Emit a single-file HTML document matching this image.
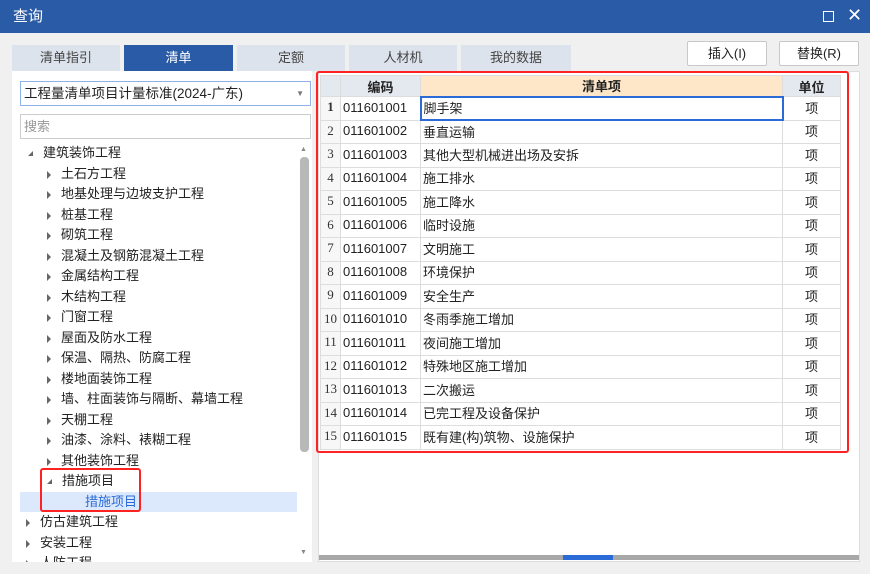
<!DOCTYPE html>
<html><head><meta charset="utf-8"><style>
*{margin:0;padding:0;box-sizing:border-box}
body{width:870px;height:574px;background:#f0f0f0;font-family:"Liberation Sans","Noto Sans CJK SC",sans-serif;font-size:13px;color:#222;position:relative;overflow:hidden}
.a{position:absolute}
.title{left:0;top:0;width:870px;height:33px;background:#2a5ba6;color:#fff;font-size:15px;line-height:33px;padding-left:13px}
.tab{top:45px;height:26px;background:#dde3ed;text-align:center;line-height:26px;color:#444;font-size:13px}
.btn{top:41px;height:25px;background:#fff;border:1px solid #c8c8c8;border-radius:2px;text-align:center;line-height:23px;font-size:13px}
.tree{position:absolute;left:0;top:0;width:297px;height:562px;overflow:hidden}
.tree div{position:absolute;height:20px;line-height:20px;font-size:13px;white-space:nowrap}
.tri{display:inline-block;width:0;height:0;border-top:4px solid transparent;border-bottom:4px solid transparent;border-left:4px solid #666;margin-right:10px;vertical-align:middle}
.down{display:inline-block;width:0;height:0;border-left:5px solid transparent;border-bottom:5px solid #666;margin-right:10px;vertical-align:middle}
table{border-collapse:collapse;position:absolute;left:320px;top:75px}
td{border:1px solid #ddd;height:23.5px;font-size:13px;padding:0 2px 2px;white-space:nowrap}
td.n{width:20px;text-align:center;font-family:"Liberation Serif",serif;background:#f7f7f7;color:#333}
th{height:21px;font-size:13px;font-weight:bold;border:1px solid #ddd;background:#e4e9f0}
</style></head><body>
<div class="a title">查询</div>
<div class="a" style="left:823px;top:11px;width:11px;height:11px;border:1.5px solid #fff"></div>
<div class="a" style="left:847px;top:5px;color:#fff;font-size:18px">✕</div>
<div class="a tab" style="left:12px;width:108px">清单指引</div>
<div class="a tab" style="left:124px;width:109px;background:#2a5ba6;color:#fff">清单</div>
<div class="a tab" style="left:237px;width:108px">定额</div>
<div class="a tab" style="left:349px;width:108px">人材机</div>
<div class="a tab" style="left:461px;width:110px">我的数据</div>
<div class="a btn" style="left:687px;width:80px">插入(I)</div>
<div class="a btn" style="left:779px;width:80px">替换(R)</div>
<div class="a" style="left:12px;top:71px;width:300px;height:491px;background:#fff"></div>
<div class="a" style="left:20px;top:81px;width:291px;height:25px;border:1px solid #8fb3e8;background:#fff;line-height:23px;padding-left:3px;font-size:13.5px">工程量清单项目计量标准(2024-广东)<span style="position:absolute;right:6px;top:0;font-size:8px;color:#777">▼</span></div>
<div class="a" style="left:20px;top:114px;width:291px;height:25px;border:1px solid #ccc;background:#fff;line-height:23px;padding-left:3px;color:#999">搜索</div>
<div class="tree">
<div style="left:28px;top:143px"><span class="down"></span>建筑装饰工程</div>
<div style="left:47px;top:164px"><span class="tri"></span>土石方工程</div>
<div style="left:47px;top:184px"><span class="tri"></span>地基处理与边坡支护工程</div>
<div style="left:47px;top:205px"><span class="tri"></span>桩基工程</div>
<div style="left:47px;top:225px"><span class="tri"></span>砌筑工程</div>
<div style="left:47px;top:246px"><span class="tri"></span>混凝土及钢筋混凝土工程</div>
<div style="left:47px;top:266px"><span class="tri"></span>金属结构工程</div>
<div style="left:47px;top:287px"><span class="tri"></span>木结构工程</div>
<div style="left:47px;top:307px"><span class="tri"></span>门窗工程</div>
<div style="left:47px;top:328px"><span class="tri"></span>屋面及防水工程</div>
<div style="left:47px;top:348px"><span class="tri"></span>保温、隔热、防腐工程</div>
<div style="left:47px;top:369px"><span class="tri"></span>楼地面装饰工程</div>
<div style="left:47px;top:389px"><span class="tri"></span>墙、柱面装饰与隔断、幕墙工程</div>
<div style="left:47px;top:410px"><span class="tri"></span>天棚工程</div>
<div style="left:47px;top:430px"><span class="tri"></span>油漆、涂料、裱糊工程</div>
<div style="left:47px;top:451px"><span class="tri"></span>其他装饰工程</div>
<div style="left:47px;top:471px"><span class="down"></span>措施项目</div>
<div style="left:20px;top:492px;width:277px;background:#dce9fc"></div>
<div style="left:85px;top:492px;color:#2a6bd8">措施项目</div>
<div style="left:26px;top:512px"><span class="tri"></span>仿古建筑工程</div>
<div style="left:26px;top:533px"><span class="tri"></span>安装工程</div>
<div style="left:26px;top:553px"><span class="tri"></span>人防工程</div>
</div>
<div class="a" style="left:40px;top:468px;width:101px;height:44px;border:2px solid #f22;border-radius:3px"></div>
<div class="a" style="left:297px;top:143px;width:14px;height:419px;background:#fff"></div>
<div class="a" style="left:300px;top:157px;width:9px;height:295px;background:#b8b8b8;border-radius:4px"></div>
<div class="a" style="left:300px;top:146px;font-size:7px;color:#888">▲</div>
<div class="a" style="left:300px;top:549px;font-size:7px;color:#888">▼</div>
<div class="a" style="left:12px;top:562px;width:300px;height:12px;background:#f0f0f0"></div>
<div class="a" style="left:318px;top:71px;width:542px;height:491px;background:#fff;border:1px solid #ddd"></div>
<table>
<tr><th></th><th style="width:80px">编码</th><th style="width:362px;background:#fde7c8">清单项</th><th style="width:58px">单位</th></tr>
<tr><td class="n"><b>1</b></td><td>011601001</td><td style="border:2px solid #2a6bd8">脚手架</td><td align="center">项</td></tr>
<tr><td class="n">2</td><td>011601002</td><td>垂直运输</td><td align="center">项</td></tr>
<tr><td class="n">3</td><td>011601003</td><td>其他大型机械进出场及安拆</td><td align="center">项</td></tr>
<tr><td class="n">4</td><td>011601004</td><td>施工排水</td><td align="center">项</td></tr>
<tr><td class="n">5</td><td>011601005</td><td>施工降水</td><td align="center">项</td></tr>
<tr><td class="n">6</td><td>011601006</td><td>临时设施</td><td align="center">项</td></tr>
<tr><td class="n">7</td><td>011601007</td><td>文明施工</td><td align="center">项</td></tr>
<tr><td class="n">8</td><td>011601008</td><td>环境保护</td><td align="center">项</td></tr>
<tr><td class="n">9</td><td>011601009</td><td>安全生产</td><td align="center">项</td></tr>
<tr><td class="n">10</td><td>011601010</td><td>冬雨季施工增加</td><td align="center">项</td></tr>
<tr><td class="n">11</td><td>011601011</td><td>夜间施工增加</td><td align="center">项</td></tr>
<tr><td class="n">12</td><td>011601012</td><td>特殊地区施工增加</td><td align="center">项</td></tr>
<tr><td class="n">13</td><td>011601013</td><td>二次搬运</td><td align="center">项</td></tr>
<tr><td class="n">14</td><td>011601014</td><td>已完工程及设备保护</td><td align="center">项</td></tr>
<tr><td class="n">15</td><td>011601015</td><td>既有建(构)筑物、设施保护</td><td align="center">项</td></tr>
</table>
<div class="a" style="left:316px;top:71px;width:533px;height:382px;border:2.5px solid #f22;border-radius:3px"></div>
<div class="a" style="left:319px;top:555px;width:540px;height:5px;background:#a8a8a8"></div>
<div class="a" style="left:563px;top:555px;width:50px;height:5px;background:#2a6bd8"></div>
</body></html>
